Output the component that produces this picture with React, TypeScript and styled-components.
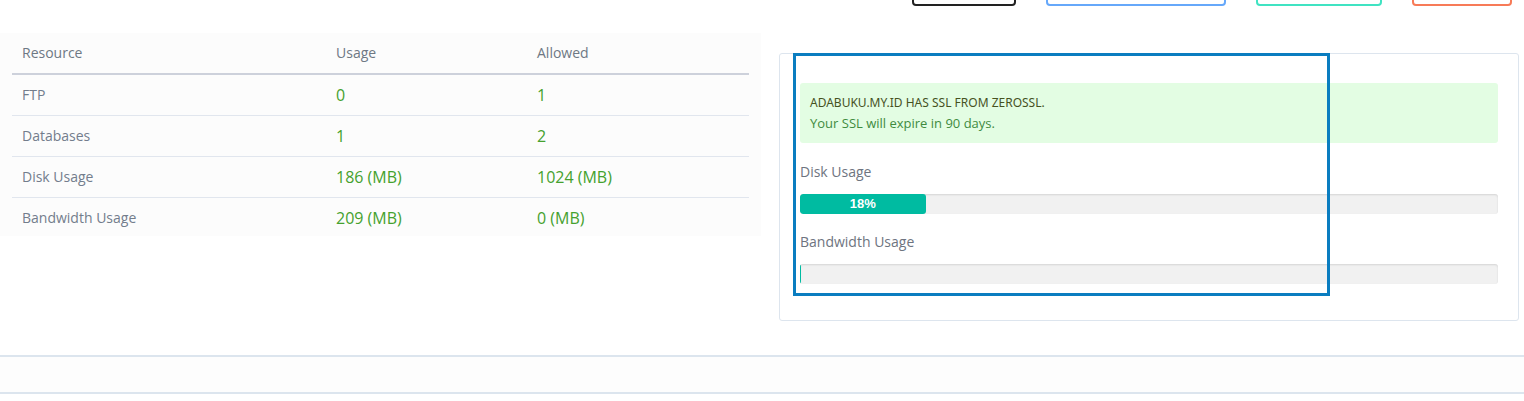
import React from "react";
import styled, { createGlobalStyle } from "styled-components";

const GlobalStyle = createGlobalStyle`
  body {
    margin: 0;
    background: #ffffff;
    font-family: "Open Sans", "Liberation Sans", sans-serif;
  }
`;

interface Resource {
  name: string;
  usage: string;
  allowed: string;
}

const resources: Resource[] = [
  { name: "FTP", usage: "0", allowed: "1" },
  { name: "Databases", usage: "1", allowed: "2" },
  { name: "Disk Usage", usage: "186 (MB)", allowed: "1024 (MB)" },
  { name: "Bandwidth Usage", usage: "209 (MB)", allowed: "0 (MB)" },
];

const Page = styled.div`
  width: 1524px;
  height: 401px;
  overflow: hidden;
  display: flex;
  flex-direction: column;
`;

const Toolbar = styled.div`
  display: flex;
  justify-content: flex-end;
  gap: 30px;
  padding-right: 12px;
  margin-top: -30px;
  height: 36px;
`;

const OutlineButton = styled.div<{ $color: string; $width: number }>`
  width: ${(p) => p.$width}px;
  height: 36px;
  box-sizing: border-box;
  border: 2px solid ${(p) => p.$color};
  border-radius: 4px;
  background: #fff;
`;

const Content = styled.div`
  display: flex;
  gap: 18px;
  margin-top: 27px;
  align-items: flex-start;
`;

const TablePanel = styled.div`
  width: 761px;
  box-sizing: border-box;
  background: #fcfcfc;
  padding: 0 12px;
  height: 203px;
  overflow: hidden;
`;

const Table = styled.table`
  width: 100%;
  border-collapse: collapse;
  font-size: 14px;
`;

const Col = styled.col<{ $width: number }>`
  width: ${(p) => p.$width}px;
`;

const HeadCell = styled.th`
  text-align: left;
  font-weight: 400;
  color: #6e7884;
  padding: 9px 10px 10px;
  line-height: 21px;
  border-bottom: 2px solid #cdd1db;
`;

const Cell = styled.td<{ $green?: boolean }>`
  padding: 10px 10px 10px;
  line-height: 20px;
  font-size: ${(p) => (p.$green ? "16px" : "14px")};
  color: ${(p) => (p.$green ? "#45a12e" : "#737d8c")};
  border-bottom: 1px solid #e1e6ee;
`;

const Card = styled.div`
  position: relative;
  margin-top: 20px;
  width: 740px;
  height: 268px;
  box-sizing: border-box;
  border: 1px solid #dde5ee;
  border-radius: 3px;
  padding: 29px 20px 0;
`;

const Highlight = styled.div`
  position: absolute;
  left: 13px;
  top: -1px;
  width: 537px;
  height: 243px;
  box-sizing: border-box;
  border: 3px solid #0a7dc0;
  pointer-events: none;
`;

const Alert = styled.div`
  background: #e3fde3;
  border-radius: 3px;
  padding: 10px 10px 9px;
  height: 60px;
  box-sizing: border-box;
`;

const AlertTitle = styled.div`
  font-family: "Noto Sans", "Open Sans", sans-serif;
  font-size: 12px;
  letter-spacing: 0;
  text-transform: uppercase;
  color: #46521f;
  line-height: 20px;
`;

const AlertText = styled.div`
  font-size: 13px;
  color: #3f8b3f;
  line-height: 21px;
`;

const Label = styled.div<{ $top: number }>`
  margin-top: ${(p) => p.$top}px;
  font-size: 14px;
  color: #6e7480;
  line-height: 20px;
`;

const Track = styled.div`
  margin-top: 12px;
  height: 20px;
  background: #f1f1f1;
  border-radius: 3px;
  box-shadow: inset 0 1px 2px rgba(0, 0, 0, 0.12);
  overflow: hidden;
`;

const Fill = styled.div`
  height: 100%;
  min-width: 1px;
  background: #00bba1;
  border-radius: 3px;
  color: #fff;
  font-family: "Liberation Sans", Arial, sans-serif;
  font-weight: 700;
  font-size: 13px;
  line-height: 20px;
  text-align: center;
`;

const Footer = styled.div`
  margin-top: 34px;
  height: 35px;
  border-top: 2px solid #dce5ee;
  border-bottom: 2px solid #dce5ee;
  background: #fdfdfd;
`;

const UsageBar: React.FC<{ percent: number }> = ({ percent }) => (
  <Track>
    <Fill style={{ width: `${percent}%` }}>{percent > 0 ? `${percent}%` : ""}</Fill>
  </Track>
);

export default function App() {
  return (
    <Page>
      <GlobalStyle />
      <Toolbar>
        <OutlineButton $color="#222222" $width={104} />
        <OutlineButton $color="#66a8fa" $width={180} />
        <OutlineButton $color="#40e3c2" $width={126} />
        <OutlineButton $color="#f77b58" $width={100} />
      </Toolbar>
      <Content>
        <TablePanel>
          <Table>
            <colgroup>
              <Col $width={314} />
              <Col $width={201} />
              <Col $width={222} />
            </colgroup>
            <thead>
              <tr>
                <HeadCell>Resource</HeadCell>
                <HeadCell>Usage</HeadCell>
                <HeadCell>Allowed</HeadCell>
              </tr>
            </thead>
            <tbody>
              {resources.map((r) => (
                <tr key={r.name}>
                  <Cell>{r.name}</Cell>
                  <Cell $green>{r.usage}</Cell>
                  <Cell $green>{r.allowed}</Cell>
                </tr>
              ))}
            </tbody>
          </Table>
        </TablePanel>
        <Card>
          <Alert>
            <AlertTitle>adabuku.my.id has SSL from ZeroSSL.</AlertTitle>
            <AlertText>Your SSL will expire in 90 days.</AlertText>
          </Alert>
          <Label $top={19}>Disk Usage</Label>
          <UsageBar percent={18} />
          <Label $top={18}>Bandwidth Usage</Label>
          <UsageBar percent={0} />
          <Highlight />
        </Card>
      </Content>
      <Footer />
    </Page>
  );
}
